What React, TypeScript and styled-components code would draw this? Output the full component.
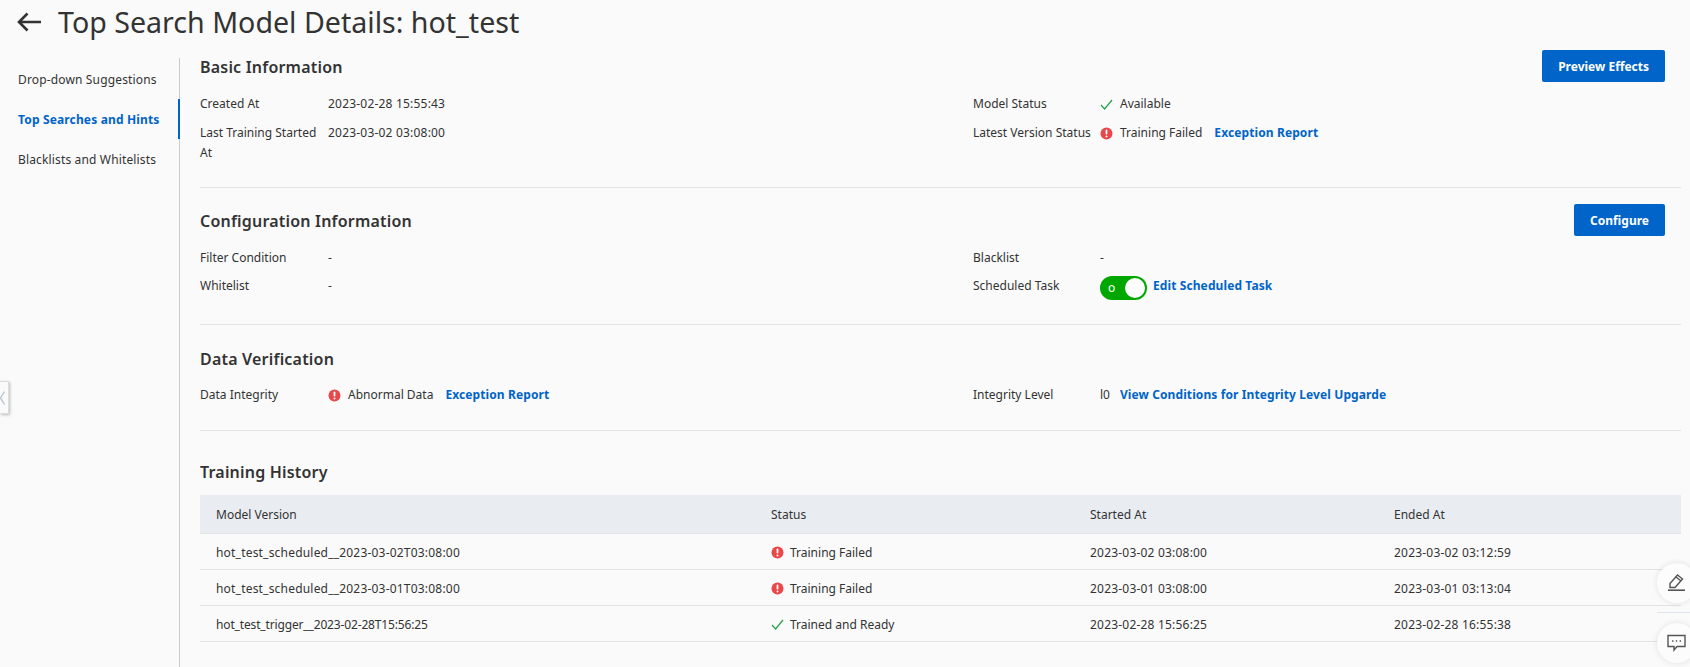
import { createGlobalStyle, styled } from 'styled-components'

const GlobalStyle = createGlobalStyle`
  html, body {
    margin: 0;
    height: 100%;
    overflow: hidden;
    background: #fafafa;
    color: #333;
    font-family: "Noto Sans", "Open Sans", sans-serif;
    font-size: 12px;
  }
`

const Page = styled.div`
  position: relative;
  width: 1690px;
  height: 667px;
  overflow: hidden;
`

const Header = styled.header`
  height: 58px;
  display: flex;
  align-items: center;
  gap: 17px;
  padding: 0 0 14px 17px;
  box-sizing: border-box;
  h1 {
    margin: 0;
    font-size: 28.6px;
    line-height: 38px;
    font-weight: 400;
    color: #333;
  }
`

const Body = styled.div`
  display: flex;
  height: 609px;
`

const Sidebar = styled.nav`
  width: 179px;
  flex: none;
  border-right: 1px solid #c9c9c9;
  padding-top: 1px;
`

const NavItem = styled.div<{ $active?: boolean }>`
  height: 40px;
  line-height: 42px;
  padding-left: 18px;
  margin-right: -1px;
  box-sizing: border-box;
  letter-spacing: 0.15px;
  color: ${p => (p.$active ? '#0064c8' : '#333')};
  font-weight: ${p => (p.$active ? 700 : 400)};
  border-right: 2px solid ${p => (p.$active ? '#0064c8' : 'transparent')};
`

const Content = styled.main`
  flex: 1;
  padding: 0 9px 0 20px;
  min-width: 0;
`

const Section = styled.section<{ $height: number }>`
  display: flow-root;
  height: ${p => p.$height}px;
  box-sizing: border-box;
  border-bottom: 1px solid #e3e3e3;
`

const SectionHead = styled.div<{ $top: number }>`
  display: flex;
  align-items: center;
  justify-content: space-between;
  height: 32px;
  margin-top: ${p => p.$top}px;
  padding-right: 16px;
`

const Title = styled.h2`
  margin: 0;
  padding-top: 1px;
  font-size: 16px;
  line-height: 24px;
  font-weight: 600;
  letter-spacing: 0.2px;
  color: #333;
`

const Button = styled.button`
  height: 32px;
  padding: 0 16px;
  border: 0;
  border-radius: 2px;
  background: #0064c8;
  color: #fff;
  font: 700 12px "Noto Sans", sans-serif;
`

const InfoGrid = styled.dl<{ $top: number; $gap?: number }>`
  display: grid;
  grid-template-columns: 128px 645px 127px 1fr;
  margin: ${p => p.$top}px 0 0;
  row-gap: ${p => p.$gap ?? 0}px;
  line-height: 20px;
`

const Label = styled.dt`
  padding-right: 2px;
  color: #333;
`

const Value = styled.dd<{ $gap?: number }>`
  margin: 0;
  display: flex;
  align-items: flex-start;
  gap: ${p => p.$gap ?? 8}px;
  height: 100%;
`

const Data = styled.span<{ $spacing?: number }>`
  letter-spacing: ${p => p.$spacing ?? 0.2}px;
`

const StatusText = styled.span<{ $gap?: number }>`
  display: inline-flex;
  align-items: center;
  gap: ${p => p.$gap ?? 7}px;
  height: 20px;
`

const LinkText = styled.a<{ $left?: number }>`
  color: #0064c8;
  font-weight: 700;
  letter-spacing: 0.1px;
  margin-left: ${p => p.$left ?? 4}px;
`

const Switch = styled.span`
  display: flex;
  align-items: center;
  width: 47px;
  height: 24px;
  padding: 0 2px 0 8px;
  box-sizing: border-box;
  border-radius: 12px;
  background: #00a700;
  color: #fff;
  font-size: 12px;
  line-height: 24px;
  &::after {
    content: '';
    width: 20px;
    height: 20px;
    margin-left: auto;
    border-radius: 50%;
    background: #fff;
  }
`

const Table = styled.div`
  margin-top: 8px;
  width: 1481px;
`

const Row = styled.div<{ $head?: boolean }>`
  display: grid;
  grid-template-columns: 555px 319px 304px 1fr;
  align-items: center;
  height: ${p => (p.$head ? 39 : 36)}px;
  padding: 1px 0 0 16px;
  box-sizing: border-box;
  border-bottom: 1px solid #e3e3e3;
  background: ${p => (p.$head ? '#e9edf2' : 'transparent')};
`

const Handle = styled.div`
  position: absolute;
  left: 0;
  top: 381px;
  width: 9px;
  height: 33px;
  box-sizing: border-box;
  background: #fafafa;
  border: 1px solid #ddd;
  border-left: 0;
  box-shadow: 1px 1px 3px rgba(0, 0, 0, 0.25);
  display: flex;
  align-items: center;
  overflow: hidden;
`

const Float = styled.div<{ $top: number }>`
  position: absolute;
  left: 1657px;
  top: ${p => p.$top}px;
  width: 40px;
  height: 40px;
  border-radius: 50%;
  background: #fcfcfc;
  box-shadow: 0 0 6px rgba(0, 0, 0, 0.1);
  padding: 11px 0 0 10px;
  box-sizing: border-box;
`

const FloatRule = styled.div`
  position: absolute;
  left: 1657px;
  top: 612px;
  width: 33px;
  height: 1px;
  background: #dfe3ea;
`

const Check = () => (
  <svg width="13" height="13" viewBox="0 0 13 13" fill="none">
    <path d="M1 7l3.6 4L12 2" stroke="#22a04a" strokeWidth="1.2" />
  </svg>
)

const Alert = () => (
  <svg width="13" height="13" viewBox="0 0 13 13">
    <circle cx="6.5" cy="6.5" r="6" fill="#e9474a" />
    <rect x="5.6" y="2.6" width="1.8" height="5" rx="0.8" fill="#fff" />
    <circle cx="6.5" cy="9.5" r="1" fill="#fff" />
  </svg>
)

const rows = [
  ['hot_test_scheduled__2023-03-02T03:08:00', 0.2, false, '2023-03-02 03:08:00', '2023-03-02 03:12:59'],
  ['hot_test_scheduled__2023-03-01T03:08:00', 0.2, false, '2023-03-01 03:08:00', '2023-03-01 03:13:04'],
  ['hot_test_trigger__2023-02-28T15:56:25', -0.15, true, '2023-02-28 15:56:25', '2023-02-28 16:55:38'],
] as const

export default function App() {
  return (
    <Page>
      <GlobalStyle />
      <Header>
        <svg width="24" height="20" viewBox="0 0 24 20" fill="none">
          <path d="M24 10H2.5M10.5 1.5L2 10l8.5 8.5" stroke="#333" strokeWidth="2.6" />
        </svg>
        <h1>Top Search Model Details: hot_test</h1>
      </Header>
      <Body>
        <Sidebar>
          <NavItem>Drop-down Suggestions</NavItem>
          <NavItem $active>Top Searches and Hints</NavItem>
          <NavItem>Blacklists and Whitelists</NavItem>
        </Sidebar>
        <Content>
          <Section $height={130}>
            <SectionHead $top={-8}>
              <Title>Basic Information</Title>
              <Button>Preview Effects</Button>
            </SectionHead>
            <InfoGrid $top={12} $gap={9}>
              <Label>Created At</Label>
              <Value><Data>2023-02-28 15:55:43</Data></Value>
              <Label>Model Status</Label>
              <Value><StatusText><Check />Available</StatusText></Value>
              <Label>Last Training Started At</Label>
              <Value><Data>2023-03-02 03:08:00</Data></Value>
              <Label>Latest Version Status</Label>
              <Value><StatusText><Alert />Training Failed</StatusText><LinkText>Exception Report</LinkText></Value>
            </InfoGrid>
          </Section>
          <Section $height={137}>
            <SectionHead $top={16}>
              <Title>Configuration Information</Title>
              <Button>Configure</Button>
            </SectionHead>
            <InfoGrid $top={12} $gap={8}>
              <Label>Filter Condition</Label>
              <Value>-</Value>
              <Label>Blacklist</Label>
              <Value>-</Value>
              <Label>Whitelist</Label>
              <Value>-</Value>
              <Label>Scheduled Task</Label>
              <Value $gap={2}><Switch>o</Switch><LinkText>Edit Scheduled Task</LinkText></Value>
            </InfoGrid>
          </Section>
          <Section $height={106}>
            <SectionHead $top={17}>
              <Title>Data Verification</Title>
            </SectionHead>
            <InfoGrid $top={11}>
              <Label>Data Integrity</Label>
              <Value><StatusText><Alert />Abnormal Data</StatusText><LinkText>Exception Report</LinkText></Value>
              <Label>Integrity Level</Label>
              <Value $gap={5}>l0<LinkText $left={5}>View Conditions for Integrity Level Upgarde</LinkText></Value>
            </InfoGrid>
          </Section>
          <SectionHead $top={24}>
            <Title>Training History</Title>
          </SectionHead>
          <Table>
            <Row $head>
              <span>Model Version</span>
              <span>Status</span>
              <span>Started At</span>
              <span>Ended At</span>
            </Row>
            {rows.map(([version, spacing, ok, started, ended]) => (
              <Row key={version}>
                <Data $spacing={spacing}>{version}</Data>
                <StatusText $gap={6}>{ok ? <Check /> : <Alert />}{ok ? 'Trained and Ready' : 'Training Failed'}</StatusText>
                <Data>{started}</Data>
                <Data>{ended}</Data>
              </Row>
            ))}
          </Table>
        </Content>
      </Body>
      <Handle>
        <svg width="5" height="14" viewBox="0 0 5 14" fill="none">
          <path d="M4.5 0.5L0.5 7l4 6.5" stroke="#b9c4d2" strokeWidth="1.4" />
        </svg>
      </Handle>
      <Float $top={563}>
        <svg width="19" height="19" viewBox="0 0 19 19" fill="none" stroke="#555" strokeWidth="1.4">
          <path d="M3 9.5L10.5 1l5 4-7.5 8.5H3z" />
          <path d="M9 3l5 4" />
          <path d="M1 16.2h17" strokeWidth="1.6" />
        </svg>
      </Float>
      <FloatRule />
      <Float $top={623}>
        <svg width="19" height="19" viewBox="0 0 19 19" fill="none" stroke="#555" strokeWidth="1.4">
          <path d="M1 1.5h17v11h-8l-3 3.5v-3.5H1z" />
          <path d="M5 7h1.4M8.8 7h1.4M12.6 7h1.4" />
        </svg>
      </Float>
    </Page>
  )
}
